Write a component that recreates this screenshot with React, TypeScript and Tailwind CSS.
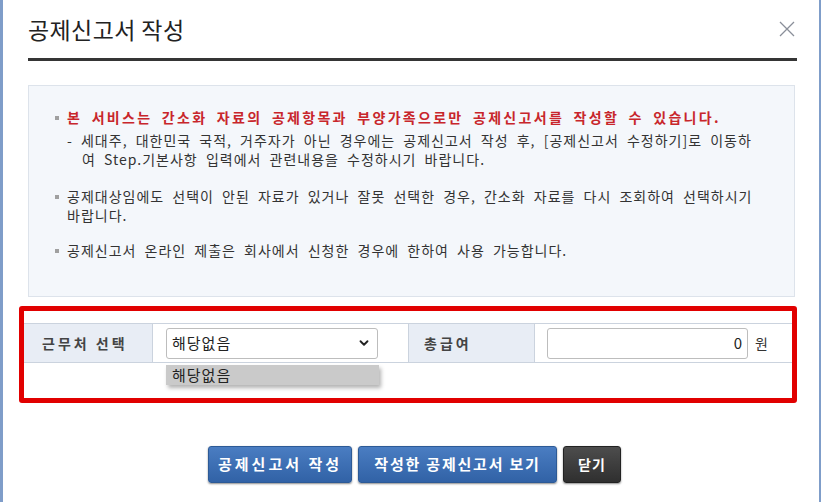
import { ChevronDown } from "lucide-react";

export default function App() {
  return (
    <div className="w-[821px] h-[502px] bg-white flex overflow-hidden font-['Noto_Sans_CJK_KR','Noto_Sans',sans-serif] text-[#333]">
      <div className="w-[3px] shrink-0 bg-[#7f9dc9]" />
      <div className="flex-1 flex flex-col pl-[25px] pr-[22px]">
        <div className="h-[58px] flex items-center justify-between">
          <h1 className="text-[23px] tracking-[0.4px] text-[#222] font-normal leading-none">공제신고서 작성</h1>
          <svg width="16" height="16" viewBox="0 0 16 16" className="mr-[2px]">
            <path d="M1 1 L15 15 M15 1 L1 15" stroke="#8a8f99" strokeWidth="1.3" fill="none" />
          </svg>
        </div>
        <div className="h-[3px] bg-[#353535]" />

        <div className="mt-[24px] mr-[2px] border border-[#dde3eb] bg-[#f4f7fb] pt-[22px] pb-[36px] pl-[26px] text-[14px] leading-[19px] tracking-[1px] [word-spacing:4px] text-[#333]">
          <div className="flex">
            <span className="w-[4px] h-[4px] bg-[#a0a0a0] mt-[8px] mr-[8px] shrink-0" />
            <div>
              <p className="text-[#c8262b] font-bold tracking-[2.3px] mb-[4px] whitespace-nowrap">
                본 서비스는 간소화 자료의 공제항목과 부양가족으로만 공제신고서를 작성할 수 있습니다.
              </p>
              <p className="whitespace-nowrap">- 세대주, 대한민국 국적, 거주자가 아닌 경우에는 공제신고서 작성 후, [공제신고서 수정하기]로 이동하</p>
              <p className="pl-[15px] whitespace-nowrap">여 Step.기본사항 입력에서 관련내용을 수정하시기 바랍니다.</p>
            </div>
          </div>
          <div className="flex mt-[18px]">
            <span className="w-[4px] h-[4px] bg-[#a0a0a0] mt-[8px] mr-[8px] shrink-0" />
            <div>
              <p className="whitespace-nowrap">공제대상임에도 선택이 안된 자료가 있거나 잘못 선택한 경우, 간소화 자료를 다시 조회하여 선택하시기</p>
              <p className="whitespace-nowrap">바랍니다.</p>
            </div>
          </div>
          <div className="flex mt-[16px]">
            <span className="w-[4px] h-[4px] bg-[#a0a0a0] mt-[8px] mr-[8px] shrink-0" />
            <p className="whitespace-nowrap">공제신고서 온라인 제출은 회사에서 신청한 경우에 한하여 사용 가능합니다.</p>
          </div>
        </div>

        <div className="mt-[9px] ml-[-9px] border-[5px] border-[#e10000] rounded-[3px] pt-[12px]">
          <div className="grid grid-cols-[129px_256px_126px_1fr] h-[40px] border-y border-[#cbd3de]">
            <div className="bg-[#e8edf5] border-r border-[#cbd3de] flex items-center pl-[18px] font-bold text-[14px] tracking-[3px] text-[#444]">
              근무처 선택
            </div>
            <div className="flex items-center pl-[13px] border-r border-[#cbd3de]">
              <div className="relative">
                <div className="w-[212px] h-[31px] border border-[#bdbdbd] rounded-[3px] bg-white flex items-center justify-between pl-[5px] pr-[6px]">
                  <span className="text-[15px] tracking-[1px] text-[#222]">해당없음</span>
                  <ChevronDown size={14} strokeWidth={3.2} color="#222" />
                </div>
                <div className="absolute left-0 top-[37px] w-[213px] h-[20px] bg-[#cacaca] shadow-[2px_3px_4px_rgba(0,0,0,0.3)] pl-[6px] text-[15px] leading-[20px] tracking-[1px] text-[#222]">
                  해당없음
                </div>
              </div>
            </div>
            <div className="bg-[#e8edf5] border-r border-[#cbd3de] flex items-center pl-[15px] font-bold text-[14px] tracking-[3px] text-[#444]">
              총급여
            </div>
            <div className="flex items-center pl-[12px]">
              <div className="w-[201px] h-[31px] border border-[#bdbdbd] rounded-[3px] bg-white flex items-center justify-end pr-[5px] text-[15px] text-[#222]">
                0
              </div>
              <span className="ml-[7px] text-[14px] text-[#333]">원</span>
            </div>
          </div>
          <div className="h-[35px]" />
        </div>

        <div className="mt-[43px] pl-[4px] flex justify-center gap-[6px]">
          <button className="w-[144px] h-[37px] rounded-[3px] border border-[#2d5a96] bg-gradient-to-b from-[#4a7dc2] to-[#3162a6] shadow-[0_1px_2px_rgba(0,0,0,0.45)] text-white font-bold text-[15px] tracking-[3px]">
            공제신고서 작성
          </button>
          <button className="w-[199px] h-[37px] rounded-[3px] border border-[#2d5a96] bg-gradient-to-b from-[#4a7dc2] to-[#3162a6] shadow-[0_1px_2px_rgba(0,0,0,0.45)] text-white font-bold text-[15px] tracking-[1.8px]">
            작성한 공제신고서 보기
          </button>
          <button className="w-[58px] h-[37px] rounded-[3px] border border-[#222] bg-gradient-to-b from-[#4d4d4d] to-[#2f2f2f] shadow-[0_1px_2px_rgba(0,0,0,0.45)] text-white font-bold text-[14px] tracking-[1px]">
            닫기
          </button>
        </div>
      </div>
      <div className="w-[2px] shrink-0 bg-[#7f9dc9]" />
    </div>
  );
}
